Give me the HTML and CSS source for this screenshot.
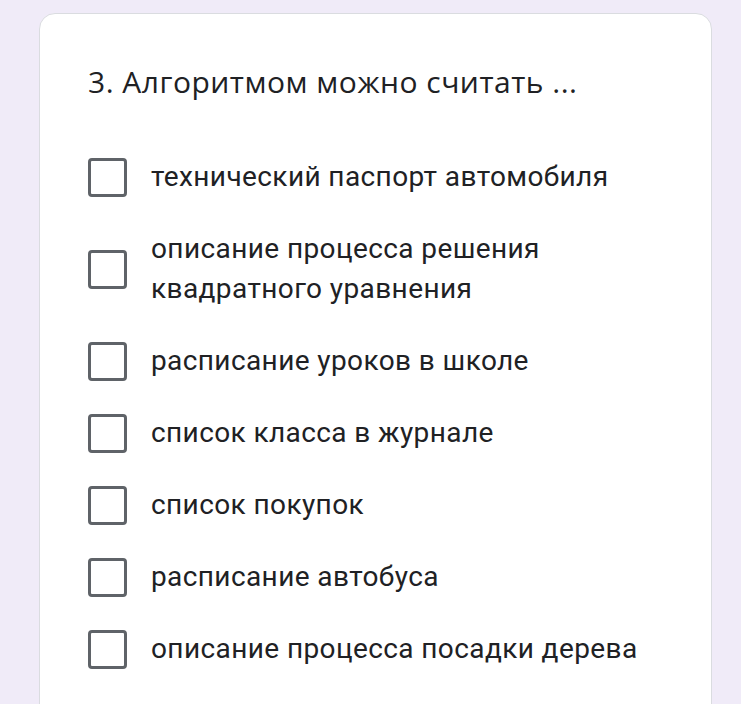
FILE: index.html
```html
<!DOCTYPE html>
<html lang="ru">
  <head>
    <meta charset="UTF-8" />
    <meta name="viewport" content="width=device-width, initial-scale=1.0" />
    <title>Вопрос 3</title>
    <link rel="stylesheet" href="styles.css">
  </head>
  <body>
    <div class="card">
      <h2 class="question">3. Алгоритмом можно считать ...</h2>

      <div class="options">
        <label class="option">
          <span class="box"></span>
          <span class="text">технический паспорт автомобиля</span>
        </label>
        <label class="option">
          <span class="box"></span>
          <span class="text">описание процесса решения<br />квадратного уравнения</span>
        </label>
        <label class="option">
          <span class="box"></span>
          <span class="text">расписание уроков в школе</span>
        </label>
        <label class="option">
          <span class="box"></span>
          <span class="text">список класса в журнале</span>
        </label>
        <label class="option">
          <span class="box"></span>
          <span class="text">список покупок</span>
        </label>
        <label class="option">
          <span class="box"></span>
          <span class="text">расписание автобуса</span>
        </label>
        <label class="option">
          <span class="box"></span>
          <span class="text">описание процесса посадки дерева</span>
        </label>
      </div>
    </div>
  </body>
</html>
```

FILE: styles.css
```css
body {
  margin: 0;
  padding: 13px 29px 0 39px;
  background-color: #f0ebf8;
  font-family: Roboto, "Noto Sans", sans-serif;
  color: #202124;
  overflow: hidden;
}

.card {
  background: #fff;
  border: 1px solid #dadce0;
  border-radius: 16px;
  padding: 48px 47px 40px 48px;
  min-height: 700px;
}

.question {
  margin: 0;
  font-family: "Open Sans", Roboto, sans-serif;
  font-size: 30px;
  font-weight: 400;
  line-height: 40px;
  letter-spacing: 0.5px;
}

.options {
  display: flex;
  flex-direction: column;
  gap: 32px;
  margin-top: 55px;
}

/* one checkbox row */
.option {
  display: flex;
  align-items: center;
  gap: 24px;
  cursor: pointer;
}

.box {
  flex: none;
  width: 33px;
  height: 33px;
  border: 3px solid #5f6368;
  border-radius: 4px;
}

.text {
  font-size: 28px;
  line-height: 40px;
  letter-spacing: 0.4px;
}
```
